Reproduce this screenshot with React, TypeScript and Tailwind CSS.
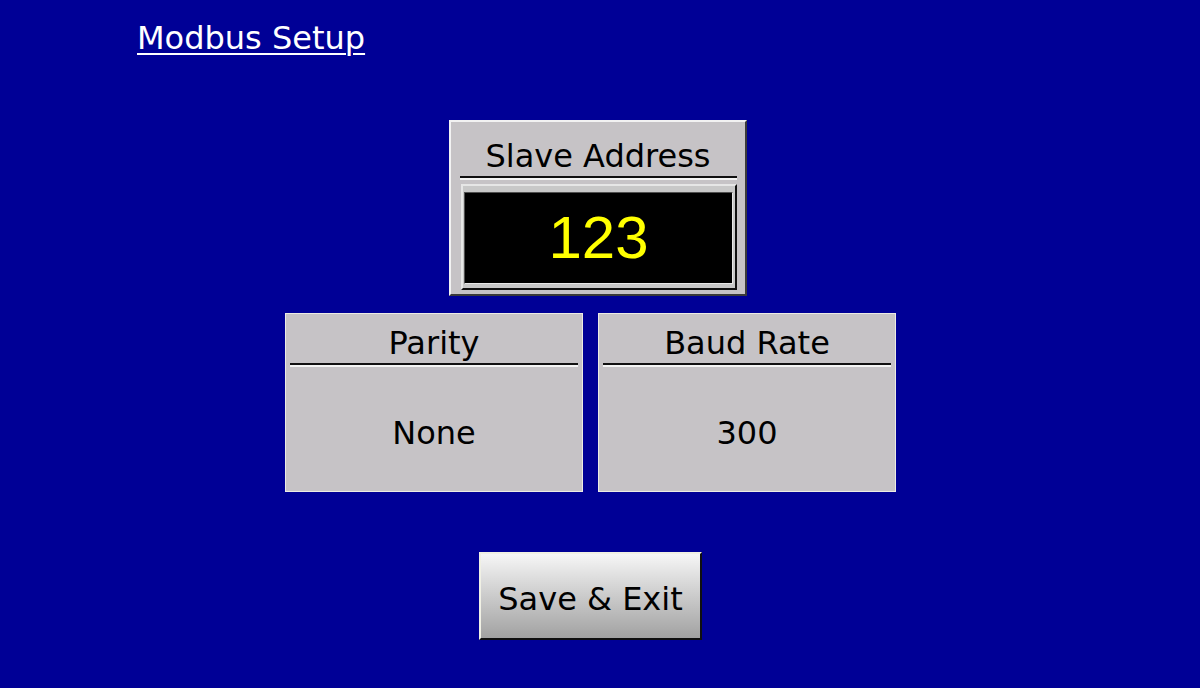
const sans = "font-['DejaVu_Sans',sans-serif]";

function Field({ label, value }: { label: string; value: string }) {
  return (
    <div className="flex h-[179px] w-[298px] flex-col border border-[#ecebe4] bg-[#c6c3c6]">
      <div
        className={`${sans} pt-[11px] text-center text-[32px] leading-[36px] text-black`}
      >
        {label}
      </div>
      <div className="mx-[4px] mt-[2px] h-[2px] bg-[#101010]" />
      <div className="mx-[4px] h-[2px] bg-[#f4f4f4]" />
      <div
        className={`${sans} flex flex-1 items-center justify-center pt-[8px] text-[32px] leading-[36px] text-black`}
      >
        {value}
      </div>
    </div>
  );
}

export default function App() {
  return (
    <div className="flex h-[688px] w-full flex-col items-start overflow-hidden bg-[#000096]">
      <div
        className={`${sans} ml-[137px] mt-[20px] text-[32px] leading-[36px] text-white underline decoration-2 underline-offset-[4px]`}
      >
        Modbus Setup
      </div>

      <div className="ml-[449px] mt-[64px] flex h-[176px] w-[298px] flex-col border-2 border-t-[#f2f2f2] border-l-[#f2f2f2] border-r-[#3a3a3a] border-b-[#3a3a3a] bg-[#c6c3c6]">
        <div
          className={`${sans} pt-[16px] text-center text-[32px] leading-[36px] text-black`}
        >
          Slave Address
        </div>
        <div className="ml-[9px] mr-[8px] mt-[2px] h-[2px] bg-[#101010]" />
        <div className="ml-[9px] mr-[8px] h-[2px] bg-[#f4f4f4]" />
        <div className="ml-[10px] mr-[8px] mt-[4px] flex h-[106px] flex-col border-2 border-t-[#e6e6e6] border-l-[#e6e6e6] border-r-[#101010] border-b-[#101010] bg-[#c8c8c8] pb-[4px] pl-[1px] pr-[2px] pt-[6px]">
          <div className="flex flex-1 items-center justify-center border border-t-[#505050] border-l-[#505050] border-r-[#e8e8e8] border-b-[#e8e8e8] bg-black">
            <span className="font-['Liberation_Sans',sans-serif] text-[60px] leading-[60px] text-[#ffff00]">
              123
            </span>
          </div>
        </div>
      </div>

      <div className="ml-[285px] mt-[17px] flex gap-[15px]">
        <Field label="Parity" value="None" />
        <Field label="Baud Rate" value="300" />
      </div>

      <button
        className={`${sans} ml-[479px] mt-[60px] flex h-[88px] w-[223px] items-center justify-center border-2 border-t-[#f0f0e4] border-l-[#f0f0e4] border-r-[#101010] border-b-[#101010] bg-gradient-to-b from-[#f6f6f6] to-[#a2a2a2] pt-[5px] text-[32px] leading-[36px] text-black`}
      >
        Save &amp; Exit
      </button>
    </div>
  );
}
